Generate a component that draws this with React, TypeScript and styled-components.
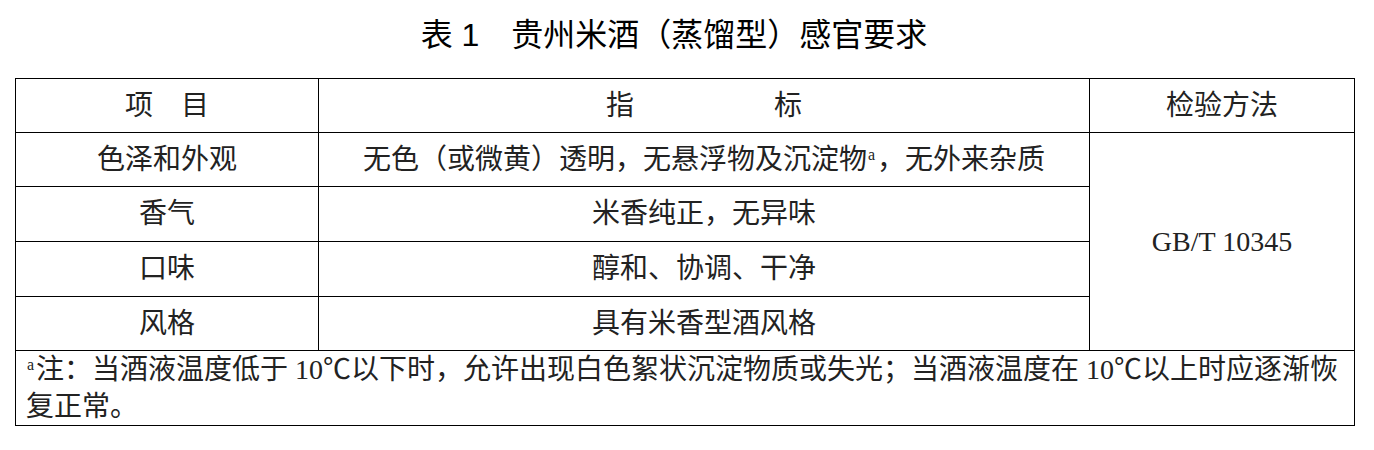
import styled, { createGlobalStyle } from 'styled-components';

const GlobalStyle = createGlobalStyle`
  html, body {
    margin: 0;
    padding: 0;
    background: #ffffff;
  }
  body {
    font-family: "Liberation Serif", "Noto Sans CJK SC", serif;
    color: #222;
  }
`;

const Page = styled.div`
  width: 1374px;
  height: 450px;
  background: #ffffff;
`;

const Title = styled.h1`
  margin: 0;
  height: 78px;
  padding: 15px 26px 0 0;
  box-sizing: border-box;
  text-align: center;
  font-family: "Liberation Sans", "Noto Sans CJK SC", sans-serif;
  font-size: 32px;
  font-weight: 400;
  line-height: 40px;
  color: #000;
`;

const Table = styled.table`
  margin-left: 15px;
  width: 1339px;
  border-collapse: collapse;
  table-layout: fixed;
  font-size: 28px;
  color: #222;
`;

const Row = styled.tr<{ $h: number }>`
  height: ${p => p.$h}px;
`;

const Cell = styled.td`
  border: 1px solid #000;
  padding: 0;
  text-align: center;
  vertical-align: middle;
  line-height: 34px;
  white-space: nowrap;
`;

const NoteCell = styled.td`
  border: 1px solid #000;
  padding: 0 8px 0 10px;
  text-align: left;
  vertical-align: top;
  line-height: 37px;
`;

const Sup = styled.span`
  display: inline-block;
  font-family: "Liberation Serif", serif;
  font-size: 16px;
  line-height: 16px;
  vertical-align: 9px;
  margin: 0 2px 0 1px;
`;

const rows = [
  { item: '色泽和外观', spec: <>无色（或微黄）透明，无悬浮物及沉淀物<Sup>a</Sup>，无外来杂质</>, h: 54 },
  { item: '香气', spec: '米香纯正，无异味', h: 55 },
  { item: '口味', spec: '醇和、协调、干净', h: 55 },
  { item: '风格', spec: '具有米香型酒风格', h: 54 },
];

export default function App() {
  return (
    <Page>
      <GlobalStyle />
      <Title>表 1　贵州米酒（蒸馏型）感官要求</Title>
      <Table>
        <colgroup>
          <col style={{ width: 303 }} />
          <col style={{ width: 771 }} />
          <col style={{ width: 265 }} />
        </colgroup>
        <tbody>
          <Row $h={54}>
            <Cell>项　目</Cell>
            <Cell>指　　　　　标</Cell>
            <Cell>检验方法</Cell>
          </Row>
          {rows.map((r, i) => (
            <Row key={r.item} $h={r.h}>
              <Cell>{r.item}</Cell>
              <Cell>{r.spec}</Cell>
              {i === 0 && <Cell rowSpan={4}>GB/T 10345</Cell>}
            </Row>
          ))}
          <Row $h={74}>
            <NoteCell colSpan={3}>
              <Sup>a</Sup>注：当酒液温度低于 10℃以下时，允许出现白色絮状沉淀物质或失光；当酒液温度在 10℃以上时应逐渐恢复正常。
            </NoteCell>
          </Row>
        </tbody>
      </Table>
    </Page>
  );
}
